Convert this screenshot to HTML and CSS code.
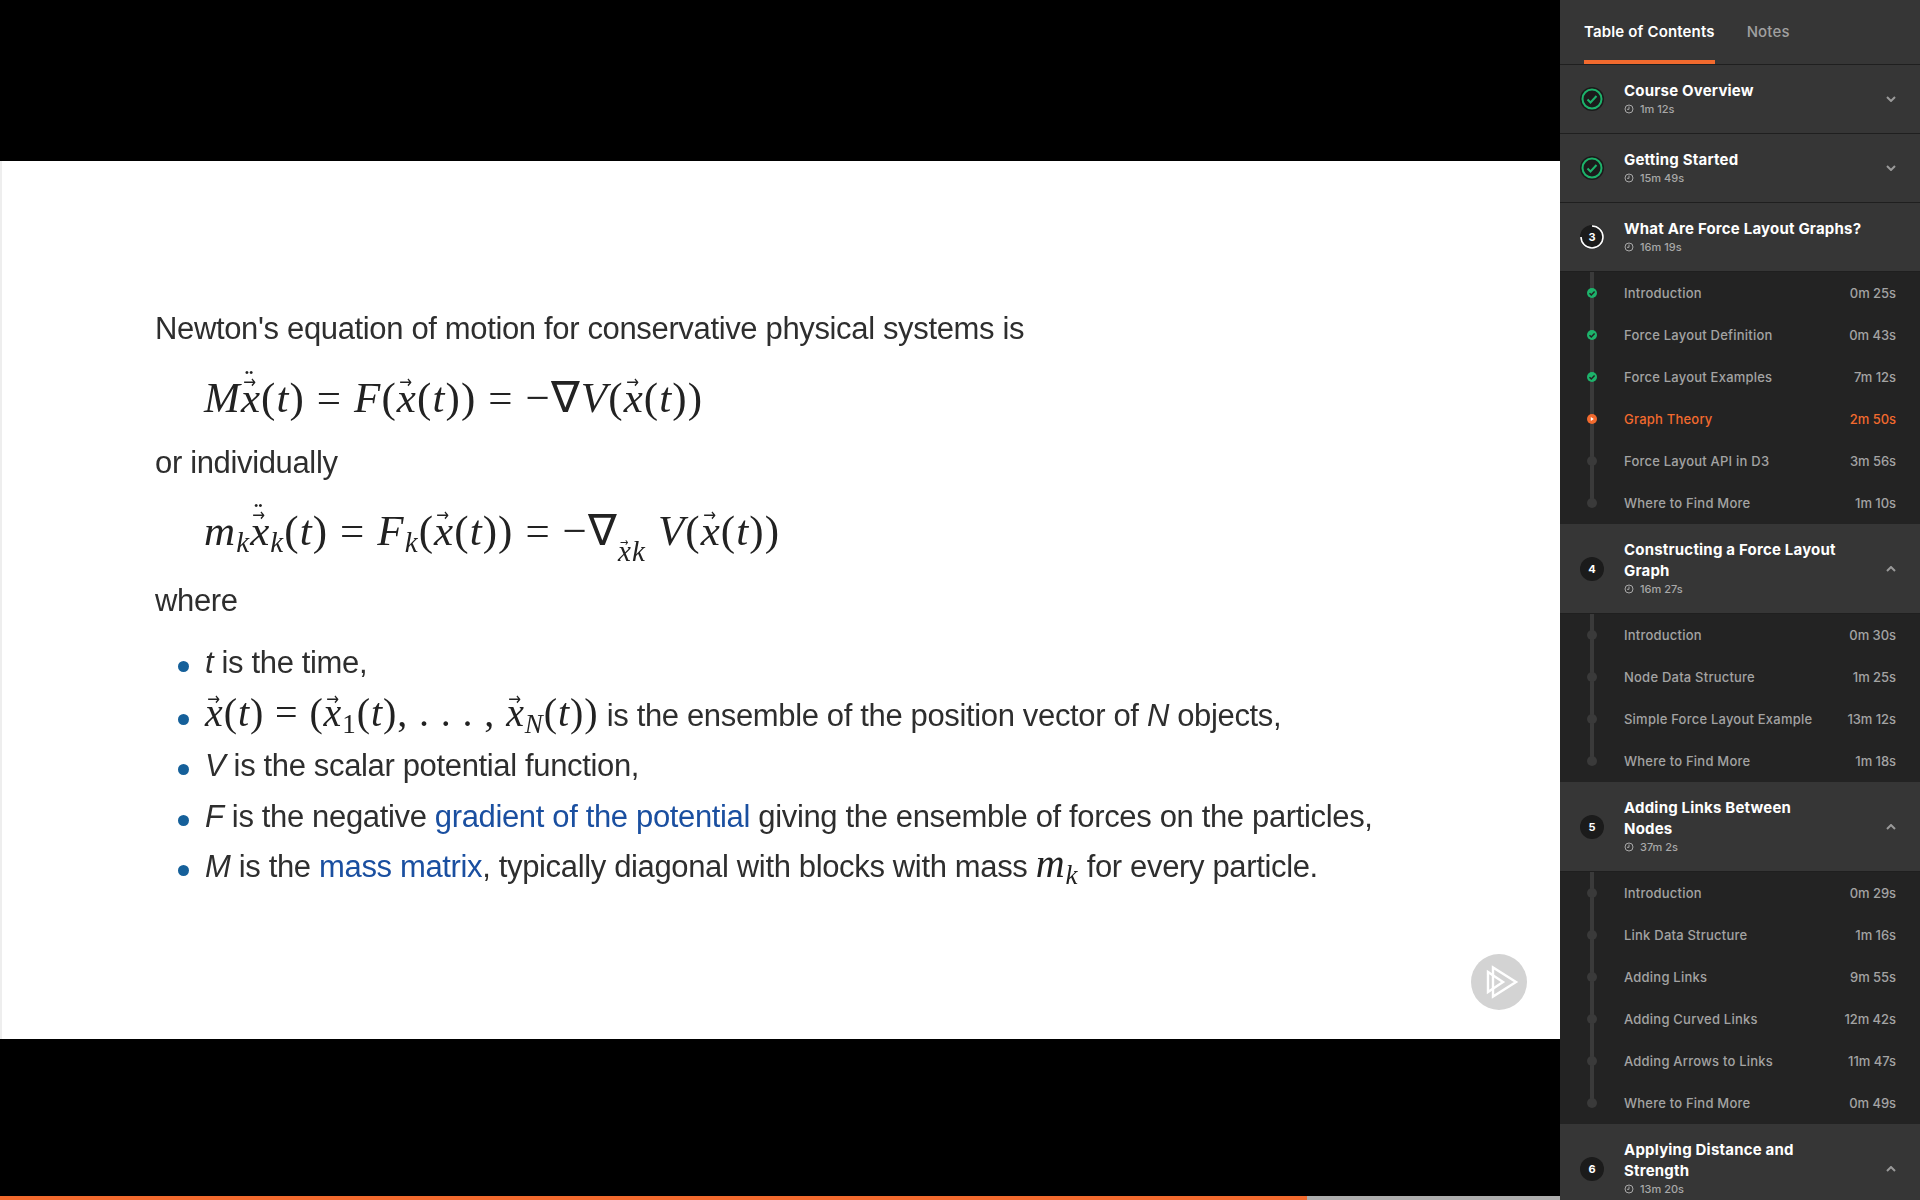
FILE: index.html
```html
<!DOCTYPE html>
<html lang="en">
<head>
<meta charset="utf-8">
<title>Graph Theory</title>
<link rel="stylesheet" href="styles.css">
</head>
<body>
<div class="app">
  <main class="stage">
    <div class="video">
      <section class="slide">
        <p class="line l1">Newton's equation of motion for conservative physical systems is</p>
        <div class="eq e1"><i>M</i><span class="vec dd"><i>x</i></span>(<i>t</i>) = <i>F</i>(<span class="vec"><i>x</i></span>(<i>t</i>)) = −∇<i>V</i>(<span class="vec"><i>x</i></span>(<i>t</i>))</div>
        <p class="line l2">or individually</p>
        <div class="eq e2"><i>m<sub>k</sub></i><span class="vec dd"><i>x</i></span><i class="sb">k</i>(<i>t</i>) = <i>F<sub>k</sub></i>(<span class="vec"><i>x</i></span>(<i>t</i>)) = −∇<sub class="nab"><span class="vec"><i>x</i></span><i>k</i></sub> <i>V</i>(<span class="vec"><i>x</i></span>(<i>t</i>))</div>
        <p class="line l3">where</p>
        <ul class="bullets">
          <li><i>t</i> is the time,</li>
          <li><span class="eq inl"><span class="vec"><i>x</i></span>(<i>t</i>) = (<span class="vec"><i>x</i></span><sub>1</sub>(<i>t</i>), . . . , <span class="vec"><i>x</i></span><sub><i>N</i></sub>(<i>t</i>))</span> is the ensemble of the position vector of <i>N</i> objects,</li>
          <li><i>V</i> is the scalar potential function,</li>
          <li><i>F</i> is the negative <a>gradient of the potential</a> giving the ensemble of forces on the particles,</li>
          <li><i>M</i> is the <a>mass matrix</a>, typically diagonal with blocks with mass <span class="eq inl"><i>m<sub>k</sub></i></span> for every particle.</li>
        </ul>
      </section>
      <div class="watermark">
        <svg viewBox="0 0 56 56" width="56" height="56" fill="none" stroke="#fff" stroke-width="2.4"><path d="M17 18v20l15-10z"/><path d="M22 13.500v29L45 28z"/></svg>
      </div>
    </div>
    <div class="progress"><div class="progress-done"></div></div>
  </main>

  <aside class="sidebar">
    <nav class="tabs">
      <span class="tab active">Table of Contents</span>
      <span class="tab">Notes</span>
    </nav>

    <div class="module">
      <span class="badge done"><svg viewBox="0 0 24 24" width="24" height="24" fill="none"><circle cx="12" cy="12" r="9.500" stroke="#1db36b" stroke-width="2"/><path d="M7.500 12.500l3 3 6-6.500" stroke="#1db36b" stroke-width="2"/></svg></span>
      <div class="m-text"><div class="m-title">Course Overview</div><div class="m-time"><svg class="clock" viewBox="0 0 10 10"><circle cx="5" cy="5" r="4"/><path d="M5 2.500V5.300H3"/></svg>1m 12s</div></div>
      <svg class="chev" viewBox="0 0 10 6"><path d="M1 1l4 4 4-4"/></svg>
    </div>
    <div class="module">
      <span class="badge done"><svg viewBox="0 0 24 24" width="24" height="24" fill="none"><circle cx="12" cy="12" r="9.500" stroke="#1db36b" stroke-width="2"/><path d="M7.500 12.500l3 3 6-6.500" stroke="#1db36b" stroke-width="2"/></svg></span>
      <div class="m-text"><div class="m-title">Getting Started</div><div class="m-time"><svg class="clock" viewBox="0 0 10 10"><circle cx="5" cy="5" r="4"/><path d="M5 2.500V5.300H3"/></svg>15m 49s</div></div>
      <svg class="chev" viewBox="0 0 10 6"><path d="M1 1l4 4 4-4"/></svg>
    </div>
    <div class="module">
      <span class="badge"><svg class="ring" viewBox="0 0 24 24" width="24" height="24" fill="none"><path d="M12 1A11 11 0 1 1 1 12" stroke="#fff" stroke-width="1.600"/></svg>3</span>
      <div class="m-text"><div class="m-title">What Are Force Layout Graphs?</div><div class="m-time"><svg class="clock" viewBox="0 0 10 10"><circle cx="5" cy="5" r="4"/><path d="M5 2.500V5.300H3"/></svg>16m 19s</div></div>
    </div>
    <ul class="lessons">
      <li class="lesson"><span class="dot ok"><svg viewBox="0 0 10 10"><path d="M2.500 5.200l1.800 1.800 3.300-3.600"/></svg></span><span class="l-name">Introduction</span><span class="l-time">0m 25s</span></li>
      <li class="lesson"><span class="dot ok"><svg viewBox="0 0 10 10"><path d="M2.500 5.200l1.800 1.800 3.300-3.600"/></svg></span><span class="l-name">Force Layout Definition</span><span class="l-time">0m 43s</span></li>
      <li class="lesson"><span class="dot ok"><svg viewBox="0 0 10 10"><path d="M2.500 5.200l1.800 1.800 3.300-3.600"/></svg></span><span class="l-name">Force Layout Examples</span><span class="l-time">7m 12s</span></li>
      <li class="lesson current"><span class="dot play"><svg viewBox="0 0 10 10"><path d="M3.800 3l3 2-3 2z"/></svg></span><span class="l-name">Graph Theory</span><span class="l-time">2m 50s</span></li>
      <li class="lesson"><span class="dot"></span><span class="l-name">Force Layout API in D3</span><span class="l-time">3m 56s</span></li>
      <li class="lesson"><span class="dot"></span><span class="l-name">Where to Find More</span><span class="l-time">1m 10s</span></li>
    </ul>

    <div class="module tall">
      <span class="badge">4</span>
      <div class="m-text"><div class="m-title">Constructing a Force Layout<br>Graph</div><div class="m-time"><svg class="clock" viewBox="0 0 10 10"><circle cx="5" cy="5" r="4"/><path d="M5 2.500V5.300H3"/></svg>16m 27s</div></div>
      <svg class="chev" viewBox="0 0 10 6"><path d="M1 5l4-4 4 4"/></svg>
    </div>
    <ul class="lessons">
      <li class="lesson"><span class="dot"></span><span class="l-name">Introduction</span><span class="l-time">0m 30s</span></li>
      <li class="lesson"><span class="dot"></span><span class="l-name">Node Data Structure</span><span class="l-time">1m 25s</span></li>
      <li class="lesson"><span class="dot"></span><span class="l-name">Simple Force Layout Example</span><span class="l-time">13m 12s</span></li>
      <li class="lesson"><span class="dot"></span><span class="l-name">Where to Find More</span><span class="l-time">1m 18s</span></li>
    </ul>

    <div class="module tall">
      <span class="badge">5</span>
      <div class="m-text"><div class="m-title">Adding Links Between<br>Nodes</div><div class="m-time"><svg class="clock" viewBox="0 0 10 10"><circle cx="5" cy="5" r="4"/><path d="M5 2.500V5.300H3"/></svg>37m 2s</div></div>
      <svg class="chev" viewBox="0 0 10 6"><path d="M1 5l4-4 4 4"/></svg>
    </div>
    <ul class="lessons">
      <li class="lesson"><span class="dot"></span><span class="l-name">Introduction</span><span class="l-time">0m 29s</span></li>
      <li class="lesson"><span class="dot"></span><span class="l-name">Link Data Structure</span><span class="l-time">1m 16s</span></li>
      <li class="lesson"><span class="dot"></span><span class="l-name">Adding Links</span><span class="l-time">9m 55s</span></li>
      <li class="lesson"><span class="dot"></span><span class="l-name">Adding Curved Links</span><span class="l-time">12m 42s</span></li>
      <li class="lesson"><span class="dot"></span><span class="l-name">Adding Arrows to Links</span><span class="l-time">11m 47s</span></li>
      <li class="lesson"><span class="dot"></span><span class="l-name">Where to Find More</span><span class="l-time">0m 49s</span></li>
    </ul>

    <div class="module tall">
      <span class="badge">6</span>
      <div class="m-text"><div class="m-title">Applying Distance and<br>Strength</div><div class="m-time"><svg class="clock" viewBox="0 0 10 10"><circle cx="5" cy="5" r="4"/><path d="M5 2.500V5.300H3"/></svg>13m 20s</div></div>
      <svg class="chev" viewBox="0 0 10 6"><path d="M1 5l4-4 4 4"/></svg>
    </div>
  </aside>
</div>
</body>
</html>
```
FILE: styles.css
```css
* { box-sizing: border-box; }
html, body { margin: 0; height: 100%; overflow: hidden; background: #000; }
.app { display: flex; width: 1920px; height: 1200px; }

/* player */
.stage { width: 1560px; height: 1200px; display: flex; flex-direction: column; background: #000; }
.video { flex: 1; display: flex; flex-direction: column; justify-content: center; position: relative; }
.slide {
  height: 878px; margin-top: 4px; background: #fff; border-left: 2px solid #eee; padding: 148px 0 0 153px;
  font-family: "Liberation Sans", Arial, sans-serif; font-size: 31px; color: #2e2e2e;
  letter-spacing: -0.35px;
}
.slide p { margin: 0; line-height: 40px; filter: blur(0.5px); }
.eq {
  font-family: "Liberation Serif", "Times New Roman", serif; font-size: 43px; color: #222;
  letter-spacing: 1.1px; white-space: nowrap; filter: blur(0.4px);
}
.e1 { margin: 19px 0 0 49px; height: 60px; line-height: 60px; }
.l2 { margin-top: 15px !important; }
.e2 { margin: 18px 0 0 49px; height: 60px; line-height: 60px; }
.l3 { margin-top: 20px !important; }
.eq sub { font-size: 29px; line-height: 0; vertical-align: -7px; }
.eq .sb { font-size: 29px; position: relative; top: 7px; }
.eq sub.nab { vertical-align: -16px; }
.vec { position: relative; display: inline-block; line-height: 1; }
.vec::before {
  content: "→"; position: absolute; left: 1px; top: -3px; font-size: 18px; font-family: "DejaVu Sans", sans-serif;
  transform: scaleX(0.85); letter-spacing: 0;
}
.nab .vec::before { font-size: 12px; top: -1px; }
.dd::after {
  content: "••"; position: absolute; left: 4px; top: -9px; font-size: 11px; line-height: 1; letter-spacing: 0.5px;
  font-family: "Liberation Sans", sans-serif;
}
.bullets { list-style: none; margin: 17px 0 0; padding: 0 0 0 50px; }
.bullets li { position: relative; height: 50.500px; line-height: 50px; white-space: nowrap; filter: blur(0.5px); }
.bullets li:first-child { margin-bottom: 2px; }
.bullets li::before {
  content: ""; position: absolute; left: -27px; top: 23px; width: 11px; height: 11px; border-radius: 50%; background: #15609a;
}
.bullets a { color: #1a4fa0; }
.bullets .inl { filter: none; font-size: 40px; line-height: 0; letter-spacing: 0.9px; }
.bullets .inl sub { font-size: 27px; }
.watermark {
  position: absolute; left: 1471px; top: 954px; width: 56px; height: 56px; border-radius: 50%; background: #d3d3d3;
  filter: blur(0.4px);
}
.watermark svg { display: block; }
.progress { height: 4px; background: #adadad; flex: none; }
.progress-done { width: 1307px; height: 100%; background: #f26a2e; }

/* sidebar */
.sidebar {
  width: 360px; height: 1200px; overflow: hidden; background: #232323;
  font-family: Inter, "Open Sans", sans-serif; color: #fff; flex: none;
}
.tabs { height: 65px; display: flex; gap: 32px; padding: 0 24px; background: #363636; border-bottom: 1px solid #1f1f1f; }
.tab { height: 64px; padding-top: 23px; font-size: 15px; line-height: 18px; font-weight: 500; color: #a0a0a0; letter-spacing: 0.15px; }
.tab.active { color: #fff; font-weight: 600; border-bottom: 4px solid #f26a2e; }

.module { height: 69px; display: flex; align-items: center; background: #363636; border-bottom: 1px solid #1f1f1f; padding: 0 24px 0 20px; }
.module.tall { height: 90px; }
.badge {
  position: relative; width: 24px; height: 24px; border-radius: 50%; background: #1b1b1b; flex: none;
  display: flex; align-items: center; justify-content: center; font-size: 11px; font-weight: 700; color: #fff;
}
.ring { position: absolute; left: 0; top: 0; }
.m-text { margin: -2px 0 0 20px; flex: 1; width: 0; }
.m-title { font-size: 15px; line-height: 21px; font-weight: 700; letter-spacing: 0.2px; }
.m-time { font-size: 11px; line-height: 16px; color: #a8a8a8; display: flex; align-items: center; font-weight: 500; }
.clock { width: 10px; height: 10px; margin-right: 6px; fill: none; stroke: #a8a8a8; stroke-width: 1; }
.chev { width: 10px; height: 6px; fill: none; stroke: #9a9a9a; stroke-width: 2; flex: none; }

.lessons { list-style: none; margin: 0; padding: 0; }
.lesson { position: relative; height: 42px; display: flex; align-items: center; padding: 0 24px 1px 64px; font-size: 13px; font-weight: 500; color: #a3a3a3; }
.lesson::before { content: ""; position: absolute; left: 30px; top: 0; bottom: 0; width: 4px; background: #3a3a3a; }
.lesson:last-child::before { bottom: 21px; }
.l-name { flex: 1; letter-spacing: 0.22px; }
.l-time { letter-spacing: -0.05px; }
.dot { position: absolute; left: 27px; top: 16px; width: 10px; height: 10px; border-radius: 50%; background: #3a3a3a; }
.dot svg { display: block; width: 10px; height: 10px; }
.dot.ok { background: #1db36b; }
.dot.ok path { fill: none; stroke: #232323; stroke-width: 1.500; }
.dot.play { background: #f26a2e; }
.dot.play path { fill: #fff; }
.lesson.current { color: #f26a2e; }
```
